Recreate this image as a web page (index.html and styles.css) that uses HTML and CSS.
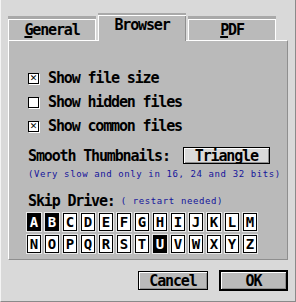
FILE: index.html
```html
<!DOCTYPE html>
<html lang="en">
  <head>
    <meta charset="UTF-8">
    <title>Preferences</title>
    <link rel="stylesheet" href="styles.css">
  </head>
  <body>
    <div class="fenetre">
      <div class="onglets">
        <div class="onglet"><u>G</u>eneral</div>
        <div class="onglet onglet-actif">Browser</div>
        <div class="onglet"><u>P</u>DF</div>
      </div>
      <div class="panneau">
        <label class="option"><span class="case case-cochee"></span>Show file size</label>
        <label class="option"><span class="case"></span>Show hidden files</label>
        <label class="option"><span class="case case-cochee"></span>Show common files</label>
        <div class="lissage">
          <span>Smooth Thumbnails:</span>
          <button class="bouton bouton-choix">Triangle</button>
        </div>
        <div class="note">(Very slow and only in 16, 24 and 32 bits)</div>
        <div class="lecteurs-titre">Skip Drive:<span class="note">( restart needed)</span></div>
        <div class="lecteurs"></div>
      </div>
      <div class="actions">
        <button class="bouton">Cancel</button>
        <button class="bouton bouton-defaut">OK</button>
      </div>
    </div>
    <script>
      const lecteurs = document.querySelector(".lecteurs");
      const ignores = ["A", "B", "U"];
      for(let i = 0; i < 26; i++) {
        const lettre = String.fromCharCode(65 + i);
        const boite = document.createElement("div");
        boite.className = "lecteur";
        if(ignores.includes(lettre)) {
          boite.classList.add("lecteur-ignore");
        }
        boite.textContent = lettre;
        lecteurs.appendChild(boite);
      }
    </script>
  </body>
</html>
```
FILE: styles.css
```css
body {
  margin: 0;
  font-family: "DejaVu Sans Mono", monospace;
  font-weight: bold;
  font-size: 15px;
  letter-spacing: -1.15px;
  color: #000;
}
.fenetre {
  width: 296px;
  height: 302px;
  box-sizing: border-box;
  background: #d9d9d9;
  border-left: 1px solid #f4f4f4;
  border-right: 1px solid #8a8a8a;
  border-bottom: 1px solid #8a8a8a;
  display: flex;
  flex-direction: column;
}
.onglets {
  display: flex;
  align-items: flex-end;
  gap: 2px;
  height: 40px;
  padding-left: 7px;
}
.onglet {
  width: 88px;
  height: 24px;
  box-sizing: border-box;
  background: #bababa;
  border-top: 3px solid #a9a9a9;
  box-shadow: inset 1px 1px 0 #fff, inset -1px 0 0 #fff;
  text-align: center;
  line-height: 22px;
}
.onglet u {
  text-decoration-thickness: 2px;
  text-underline-offset: 1px;
}
.onglet-actif {
  height: 28px;
  margin-bottom: -1px;
  position: relative;
  z-index: 1;
  border-top: 2px solid #a9a9a9;
  box-shadow: inset 1px 1px 0 #fff, inset -1px 0 0 #8f8f8f;
  line-height: 20px;
}
.panneau {
  margin-left: 7px;
  width: 280px;
  height: 220px;
  box-sizing: border-box;
  background: #bababa;
  border-top: 1px solid #fff;
  border-left: 1px solid #fff;
  border-right: 1px solid #8f8f8f;
  border-bottom: 1px solid #8f8f8f;
  padding: 25px 0 0 19px;
  display: flex;
  flex-direction: column;
}
.option {
  display: flex;
  align-items: center;
  gap: 9px;
  height: 24px;
}
.case {
  width: 11px;
  height: 11px;
  box-sizing: border-box;
  background: #fff;
  border: 1px solid #000;
  box-shadow: 1px 1px 0 #fff;
  display: flex;
  align-items: center;
  justify-content: center;
  line-height: 1;
}
.case-cochee::before {
  content: "✕";
  font-family: "DejaVu Sans", sans-serif;
  font-size: 9px;
  font-weight: bold;
  letter-spacing: 0;
}
.lissage {
  display: flex;
  align-items: center;
  gap: 13px;
  margin-top: 9px;
  height: 17px;
}
.bouton {
  font: inherit;
  letter-spacing: inherit;
  color: #000;
  padding: 0;
  margin: 0;
  background: #bababa;
  border: 1px solid #000;
  box-shadow: inset 1px 1px 0 #fff, inset -1px -1px 0 #8f8f8f;
}
.bouton-choix {
  width: 87px;
  height: 17px;
  line-height: 14px;
  background: #dadada;
}
.note {
  font-size: 9px;
  font-weight: normal;
  letter-spacing: 0.6px;
  color: #14149a;
  height: 10px;
  line-height: 10px;
  margin-top: 5px;
}
.lecteurs-titre {
  display: flex;
  align-items: center;
  gap: 6px;
  height: 14px;
  margin-top: 15px;
}
.lecteurs-titre .note {
  margin-top: 0;
}
.lecteurs {
  display: grid;
  grid-template-columns: repeat(13, 14px);
  grid-auto-rows: 18px;
  gap: 4px;
  margin-top: 5px;
  margin-left: -1px;
}
.lecteur {
  background: #fff;
  border: 1px solid #000;
  box-shadow: 0 0 0 1px #e8e8e8;
  text-align: center;
  line-height: 16px;
  letter-spacing: 0;
  font-size: 14px;
}
.lecteur-ignore {
  background: #000;
  color: #fff;
}
.actions {
  display: flex;
  justify-content: flex-end;
  align-items: center;
  gap: 11px;
  padding-right: 7px;
  flex: 1;
}
.bouton-defaut {
  width: 69px;
  height: 21px;
  border-width: 2px;
}
.actions .bouton:first-child {
  width: 70px;
  height: 19px;
}
```
